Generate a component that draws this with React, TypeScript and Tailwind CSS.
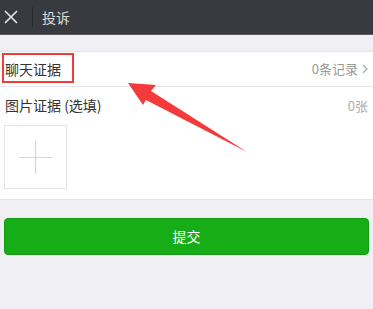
import React from 'react';

const font = { fontFamily: '"Noto Sans CJK SC", "Liberation Sans", sans-serif' };

function Header() {
  return (
    <div className="h-[35px] bg-[#393a3f] border-b border-[#5a5b60] flex items-center">
      <svg width="14" height="14" viewBox="0 0 14 14" className="ml-[4px]">
        <path d="M1 1 L13 13 M13 1 L1 13" stroke="#e6e6e6" strokeWidth="1.6" />
      </svg>
      <div className="ml-[14px] w-px h-[20px] bg-[#2a2b2f]" />
      <span className="ml-[9px] text-[14px] text-[#dcdcdc] leading-none">投诉</span>
    </div>
  );
}

export default function App() {
  return (
    <div className="w-[373px] h-[309px] bg-[#efeff4] relative overflow-hidden" style={font}>
      <Header />

      <div className="mt-[16px] bg-white border-y border-[#e5e5e5]">
        {/* chat evidence row */}
        <div className="h-[35px] flex items-center justify-between pl-[5px] pr-[5px] border-b border-[#e5e5e5] relative">
          <span className="text-[14px] text-[#333]">聊天证据</span>
          <span className="text-[13px] text-[#999] flex items-center gap-[4px]">
            0条记录
            <svg width="6" height="10" viewBox="0 0 6 10">
              <path d="M1 1 L5 5 L1 9" stroke="#aaa" strokeWidth="1.2" fill="none" />
            </svg>
          </span>
          <div className="absolute left-[2px] top-[1px] w-[72px] h-[30px] border-2 border-[#f03b3b]" />
        </div>

        {/* picture evidence */}
        <div className="pl-[5px] pr-[5px] pt-[8px] pb-[10px]">
          <div className="flex items-center justify-between">
            <span className="text-[14px] text-[#333]">图片证据 (选填)</span>
            <span className="text-[13px] text-[#aaa]">0张</span>
          </div>
          <div className="mt-[9px] -ml-px w-[63px] h-[64px] border border-[#e3e3e3] flex items-center justify-center">
            <svg width="33" height="33" viewBox="0 0 33 33">
              <path d="M0 16.5 H33 M16.5 0 V33" stroke="#d6d6d6" strokeWidth="1.2" />
            </svg>
          </div>
        </div>
      </div>

      <div className="px-[4px] mt-[18px]">
        <button className="w-full h-[37px] rounded-[4px] bg-[#16ad17] border border-[#129a13] text-white text-[14px]">
          提交
        </button>
      </div>

      {/* annotation arrow */}
      <svg className="absolute left-0 top-0" width="373" height="309" viewBox="0 0 373 309">
        <polygon points="128,83 156,85 151,91 247,152 146,100 143,105" fill="#f43a3a" />
      </svg>
    </div>
  );
}
